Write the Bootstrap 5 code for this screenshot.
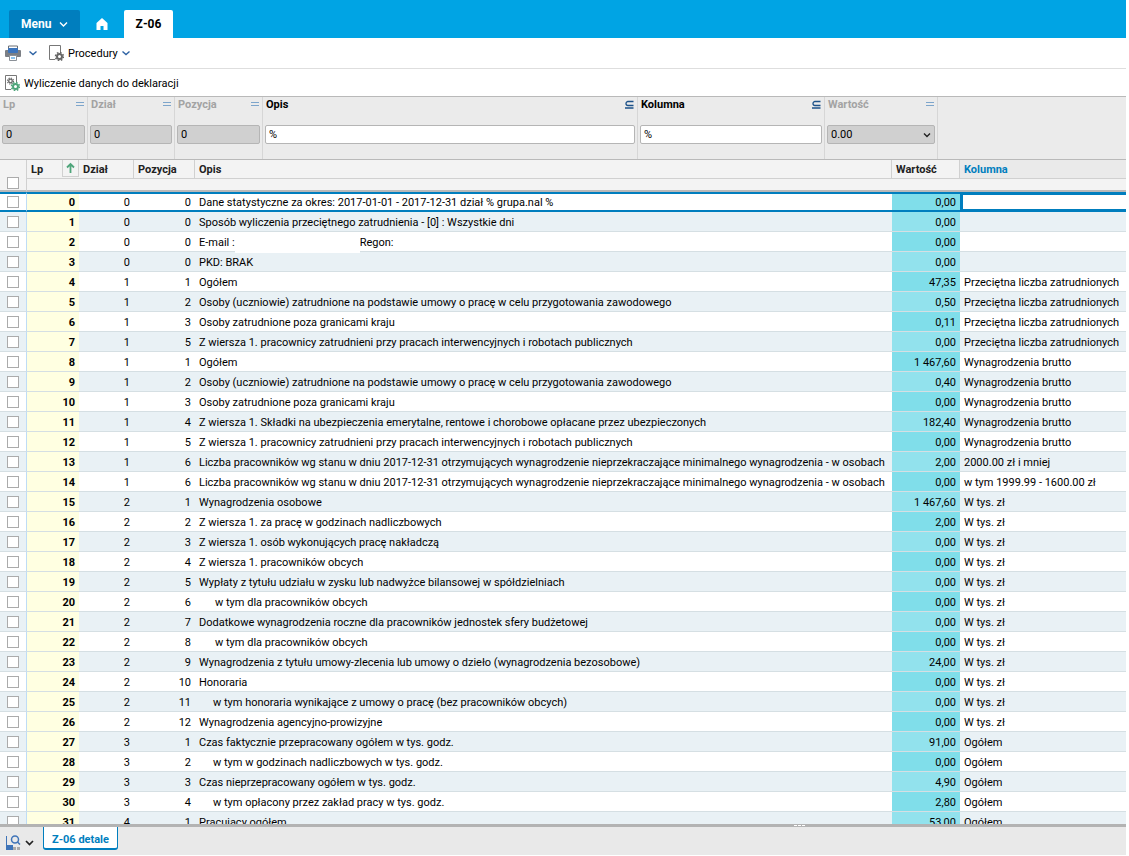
<!DOCTYPE html>
<html lang="pl">
<head>
<meta charset="utf-8">
<meta name="viewport" content="width=device-width, initial-scale=1">
<title>Z-06</title>
<link href="https://cdn.jsdelivr.net/npm/bootstrap@5.3.0/dist/css/bootstrap.min.css" rel="stylesheet">
<style>
  :root { --blue: #007ebe; --sky: #00a4e4; --line: #b9b9b9; }
  body { font: 11px/16px Roboto, "Liberation Sans", sans-serif; color: #000; background: #fff; }
  svg { display: block; flex: none; }
  .app { height: 100vh; padding-right: 3px; padding-bottom: 1px; }
  .topbar { height: 38px; background: var(--sky); padding-left: 9px; }
  .topbar .tab-item { height: 28px; border: 0; border-radius: 2px 2px 0 0; font-size: 12px; font-weight: 700; color: #fff; }
  .topbar .menu-btn { width: 71px; background: var(--blue); padding: 0 12px; }
  .topbar .home-tab { width: 44px; }
  .topbar .open-tab { width: 49px; background: #fff; color: #000; }
  .tool { border: 0; background: none; padding: 0; color: #000; }
  .tool span { padding-top: 2px; }
  .toolrow-a { height: 31px; border-bottom: 1px solid #dedede; padding-left: 5px; }
  .toolrow-b { height: 28px; border-bottom: 1px solid var(--line); padding-left: 5px; }
  .filters { display: grid; grid-template-columns: 88px 87px 88px 375fr 187fr 113px 188fr; height: 63px; background: #ebebeb; border-bottom: 1px solid var(--line); }
  .fcell { border-right: 1px solid #d6d6d6; padding: 0 2px; min-width: 0; }
  .fcell:last-child { border: 0; }
  .fhead { height: 28px; padding: 0 1px; font-weight: 700; }
  .fhead label { line-height: 15px; }
  .fcell.off .fhead { color: #a3a3a3; }
  .fcell .fin { display: block; width: 100%; height: 19px; min-height: 0; line-height: 16px; padding: 0 3px; font-size: 11px; color: #000; border: 1px solid #b5b5b5; border-radius: 2px; background-color: #fff; }
  .fcell.off .fin { background-color: #d0d0d0; }
  .fcell select.fin { appearance: none; background: #d0d0d0 url("data:image/svg+xml,%3Csvg xmlns='http://www.w3.org/2000/svg' viewBox='0 0 8 8'%3E%3Cpath d='M1 2.5l3 3 3-3' fill='none' stroke='%23222' stroke-width='1.4'/%3E%3C/svg%3E") no-repeat right 3px center / 8px 8px; }
  .gridwrap { flex: 1 1 0; min-height: 0; overflow: hidden; }
  .grid { table-layout: fixed; width: 100%; margin: 0; border-collapse: separate; border-spacing: 0; color: #000; }
  .grid > * > tr > * { padding: 0 4px; white-space: nowrap; vertical-align: top; border: 0 solid #d5dfe3; box-shadow: none; color: #000; }
  .grid thead th { height: 19px; line-height: 16px; padding-top: 2px; background: #f3f3f3; border-right: 1px solid #d0d0d0; border-bottom: 1px solid #d0d0d0; color: #222; }
  .grid thead th.current { background: #eaeaea; color: var(--blue); border-right: 0; }
  .grid thead th:first-child { border-bottom: 2px solid var(--line); padding: 17px 7px 0; }
  .grid thead th.sorted { padding-top: 0; padding-right: 0; border-right: 0; }
  .sorted .caption-text { padding-top: 2px; }
  .grid thead td { height: 13px; background: #f3f3f3; border-bottom: 2px solid var(--line); }
  .sortbox { width: 17px; height: 17px; border: 1px solid #d0d0d0; border-top: 0; }
  .tick { appearance: none; display: block; width: 12px; height: 12px; margin: 0; border: 1px solid #ababab; background: #fff; }
  .grid tbody td, .grid tbody th { height: 20px; line-height: 17px; padding-top: 2px; border-bottom-width: 1px; text-align: left; }
  .grid tbody tr:nth-child(even) > * { background: #e9f1f5; }
  .grid tbody tr > :first-child { padding: 4px 7px 0; border-right: 1px solid #bfdcf5; }
  .grid tbody tr > th { background: #ffffe1; text-align: right; }
  .grid tbody tr:nth-child(even) > th { background: #ffffe1; }
  .grid tbody tr > .num { text-align: right; padding-right: 4px; }
  .grid tbody tr > .sum { background: #80deea; text-align: right; }
  .grid tbody tr:nth-child(even) > .sum { background: #92e2ed; }
  .grid tbody tr.chosen > * { border-top: 2px solid var(--blue); border-bottom: 2px solid var(--blue); line-height: 14px; }
  .grid tbody tr.chosen > :first-child { padding-top: 2px; }
  .grid tbody tr.chosen > .focus-cell { border: 3px solid var(--blue); border-right: 0; }
  .hidden-data { display: inline-block; vertical-align: top; width: 125px; height: 19px; margin-bottom: -2px; background: #fff; }
  .indent-s { padding-left: 14px; }
  .indent-m { padding-left: 16px; }
  .splitter { height: 3px; background: #b3b3b3; padding-left: 472px; }
  .splitter i { width: 3px; height: 1px; margin-top: 1px; background: #fff; }
  .footbar { height: 28px; background: #e9e9e9; padding-left: 6px; }
  .foot-tab { width: 75px; height: 23px; border: 1px solid var(--blue); border-top: 0; border-bottom-width: 2px; border-radius: 0 0 3px 3px; background: #fff; color: var(--blue); font-weight: 700; margin-left: 9px; padding: 4px 0 0; }
</style>
</head>
<body>
<div class="app d-flex flex-column">
  <nav class="topbar d-flex align-items-end">
    <button class="tab-item menu-btn d-flex align-items-center justify-content-between" type="button">Menu
      <svg width="9" height="8" viewBox="0 0 9 8"><path d="M1 2.500l3.500 3.500L8 2.500" fill="none" stroke="#fff" stroke-width="1.400"/></svg>
    </button>
    <a class="tab-item home-tab d-flex align-items-center justify-content-center" href="#" aria-label="Start">
      <svg width="12" height="12" viewBox="0 0 12 12"><path d="M6 0L.5 5v7H4.500V8h3v4h4V5z" fill="#fff"/></svg>
    </a>
    <a class="tab-item open-tab d-flex align-items-center justify-content-center text-decoration-none" href="#">Z-06</a>
  </nav>

  <div class="toolrow-a d-flex align-items-center">
    <button class="tool d-flex align-items-center gap-2" type="button" aria-label="Drukuj">
      <svg width="16" height="16" viewBox="0 0 16 16"><path d="M3.500 5V1h9v4" fill="#fff" stroke="#6b6f75"/><path d="M1 5h14q1 0 1 1v5q0 1-1 1H1q-1 0-1-1V6q0-1 1-1z" fill="#7b7f85"/><rect x="3" y="3" width="10" height="5" rx="1" fill="#3b74bd"/><path d="M4.500 10.500h7v5h-7z" fill="#fff" stroke="#8b9097"/><path d="M6 12h4v2H6z" fill="#8cc4ee"/></svg>
      <svg width="8" height="8" viewBox="0 0 8 8"><path d="M.5 2.500L4 5.500l3.500-3" fill="none" stroke="#2d62a3" stroke-width="1.400"/></svg>
    </button>
    <button class="tool d-flex align-items-center gap-1 ms-2 ps-1" type="button">
      <svg width="15" height="16" viewBox="0 0 15 16"><path d="M6 14.500H.5V.5h11V7" fill="#fff" stroke="#777"/><circle cx="10.500" cy="11.500" r="2.500" fill="none" stroke="#666" stroke-width="2"/><circle cx="10.500" cy="11.500" r="4" fill="none" stroke="#666" stroke-width="1.500" stroke-dasharray="1.600 1.540"/></svg>
      <span>Procedury</span>
      <svg width="8" height="8" viewBox="0 0 8 8"><path d="M.5 2.500L4 5.500l3.500-3" fill="none" stroke="#2d62a3" stroke-width="1.400"/></svg>
    </button>
  </div>

  <div class="toolrow-b d-flex align-items-center">
    <button class="tool d-flex align-items-center gap-1" type="button">
      <svg width="15" height="16" viewBox="0 0 15 16"><path d="M6 14.500H.5V.5h11V7" fill="#fff" stroke="#777"/><circle cx="5.500" cy="6" r="1.800" fill="none" stroke="#666" stroke-width="1.300"/><circle cx="5.500" cy="6" r="3" fill="none" stroke="#666" stroke-width="1.200" stroke-dasharray="1.200 1.156"/><circle cx="10.500" cy="11.500" r="2.500" fill="none" stroke="#4fa57b" stroke-width="2"/><circle cx="10.500" cy="11.500" r="4" fill="none" stroke="#4fa57b" stroke-width="1.500" stroke-dasharray="1.600 1.540"/></svg>
      <span>Wyliczenie danych do deklaracji</span>
    </button>
  </div>

  <form class="filters">
    <div class="fcell off"><div class="fhead d-flex justify-content-between"><label for="f1">Lp</label><svg width="8" height="15" viewBox="0 0 8 15"><path d="M0 5.500h8M0 8.500h8" stroke="#7da5cb"/></svg></div><input class="fin" id="f1" value="0"></div>
    <div class="fcell off"><div class="fhead d-flex justify-content-between"><label for="f2">Dział</label><svg width="8" height="15" viewBox="0 0 8 15"><path d="M0 5.500h8M0 8.500h8" stroke="#7da5cb"/></svg></div><input class="fin" id="f2" value="0"></div>
    <div class="fcell off"><div class="fhead d-flex justify-content-between"><label for="f3">Pozycja</label><svg width="8" height="15" viewBox="0 0 8 15"><path d="M0 5.500h8M0 8.500h8" stroke="#7da5cb"/></svg></div><input class="fin" id="f3" value="0"></div>
    <div class="fcell"><div class="fhead d-flex justify-content-between"><label for="f4">Opis</label><svg width="9" height="15" viewBox="0 0 9 15"><path d="M8.500 4.500H3a1.500 1.500 0 0 0 0 4h5.500M0 11h8.500" fill="none" stroke="#1d5289" stroke-width="1.300"/></svg></div><input class="fin" id="f4" value="%"></div>
    <div class="fcell"><div class="fhead d-flex justify-content-between"><label for="f5">Kolumna</label><svg width="9" height="15" viewBox="0 0 9 15"><path d="M8.500 4.500H3a1.500 1.500 0 0 0 0 4h5.500M0 11h8.500" fill="none" stroke="#1d5289" stroke-width="1.300"/></svg></div><input class="fin" id="f5" value="%"></div>
    <div class="fcell off"><div class="fhead d-flex justify-content-between"><label for="f6">Wartość</label><svg width="8" height="15" viewBox="0 0 8 15"><path d="M0 5.500h8M0 8.500h8" stroke="#7da5cb"/></svg></div><select class="fin" id="f6"><option>0.00</option></select></div>
    <div class="fcell"></div>
  </form>

  <div class="gridwrap">
    <table class="grid table">
      <colgroup><col style="width:27px"><col style="width:52px"><col style="width:55px"><col style="width:61px"><col><col style="width:68px"><col style="width:166px"></colgroup>
      <thead>
        <tr>
          <th rowspan="2"><input class="tick" type="checkbox" aria-label="Zaznacz wszystkie"></th>
          <th class="sorted"><div class="d-flex justify-content-between"><span class="caption-text">Lp</span><span class="sortbox"><svg width="15" height="16" viewBox="0 0 15 16"><path d="M7.500 13V4M4 7.500L7.500 4 11 7.500" fill="none" stroke="#4fa57b" stroke-width="1.800"/></svg></span></div></th>
          <th>Dział</th><th>Pozycja</th><th>Opis</th><th>Wartość</th><th class="current">Kolumna</th>
        </tr>
        <tr><td colspan="6"></td></tr>
      </thead>
      <tbody id="rows"></tbody>
    </table>
  </div>

  <div class="splitter d-flex justify-content-center"><div class="d-flex" style="gap:1px"><i></i><i></i><i></i></div></div>
  <footer class="footbar d-flex align-items-start">
    <button class="tool d-flex align-items-center gap-1 pt-2" type="button" aria-label="Widoki">
      <svg width="15" height="16" viewBox="0 0 15 16"><path d="M0 1h1v9h6v5H0z" fill="#3f74b8"/><path d="M7 12h3v3H7zM11 12h3v3h-3z" fill="#aaa"/><circle cx="9" cy="4.500" r="3.500" fill="#e9e9e9" stroke="#3f74b8" stroke-width="1.500"/><path d="M11.500 7l2.500 2.500" stroke="#3f74b8" stroke-width="1.500"/></svg>
      <svg width="9" height="8" viewBox="0 0 9 8"><path d="M1 2L4.500 5.500 8 2" fill="none" stroke="#222" stroke-width="1.700"/></svg>
    </button>
    <button class="foot-tab" type="button">Z-06 detale</button>
  </footer>
</div>

<script>
  const zal = 'Przeciętna liczba zatrudnionych', wb = 'Wynagrodzenia brutto', tys = 'W tys. zł';
  const uczniowie = 'Osoby (uczniowie) zatrudnione na podstawie umowy o pracę w celu przygotowania zawodowego';
  const granica = 'Osoby zatrudnione poza granicami kraju';
  const interw = 'Z wiersza 1. pracownicy zatrudnieni przy pracach interwencyjnych i robotach publicznych';
  const liczba = 'Liczba pracowników wg stanu w dniu 2017-12-31 otrzymujących wynagrodzenie nieprzekraczające minimalnego wynagrodzenia - w osobach';
  const obcy = '<span class="indent-m">w tym dla pracowników obcych</span>';
  const data = [
    [0, 0, 'Dane statystyczne za okres: 2017-01-01 - 2017-12-31 dział % grupa.nal %', '0,00', ''],
    [0, 0, 'Sposób wyliczenia przeciętnego zatrudnienia - [0] : Wszystkie dni', '0,00', ''],
    [0, 0, 'E-mail :<span class="hidden-data"></span>Regon:', '0,00', ''],
    [0, 0, 'PKD: BRAK', '0,00', ''],
    [1, 1, 'Ogółem', '47,35', zal],
    [1, 2, uczniowie, '0,50', zal],
    [1, 3, granica, '0,11', zal],
    [1, 5, interw, '0,00', zal],
    [1, 1, 'Ogółem', '1 467,60', wb],
    [1, 2, uczniowie, '0,40', wb],
    [1, 3, granica, '0,00', wb],
    [1, 4, 'Z wiersza 1. Składki na ubezpieczenia emerytalne, rentowe i chorobowe opłacane przez ubezpieczonych', '182,40', wb],
    [1, 5, interw, '0,00', wb],
    [1, 6, liczba, '2,00', '2000.00 zł i mniej'],
    [1, 6, liczba, '0,00', 'w tym 1999.99 - 1600.00 zł'],
    [2, 1, 'Wynagrodzenia osobowe', '1 467,60', tys],
    [2, 2, 'Z wiersza 1. za pracę w godzinach nadliczbowych', '2,00', tys],
    [2, 3, 'Z wiersza 1. osób wykonujących pracę nakładczą', '0,00', tys],
    [2, 4, 'Z wiersza 1. pracowników obcych', '0,00', tys],
    [2, 5, 'Wypłaty z tytułu udziału w zysku lub nadwyżce bilansowej w spółdzielniach', '0,00', tys],
    [2, 6, obcy, '0,00', tys],
    [2, 7, 'Dodatkowe wynagrodzenia roczne dla pracowników jednostek sfery budżetowej', '0,00', tys],
    [2, 8, obcy, '0,00', tys],
    [2, 9, 'Wynagrodzenia z tytułu umowy-zlecenia lub umowy o dzieło (wynagrodzenia bezosobowe)', '24,00', tys],
    [2, 10, 'Honoraria', '0,00', tys],
    [2, 11, '<span class="indent-s">w tym honoraria wynikające z umowy o pracę (bez pracowników obcych)</span>', '0,00', tys],
    [2, 12, 'Wynagrodzenia agencyjno-prowizyjne', '0,00', tys],
    [3, 1, 'Czas faktycznie przepracowany ogółem w tys. godz.', '91,00', 'Ogółem'],
    [3, 2, '<span class="indent-s">w tym w godzinach nadliczbowych w tys. godz.</span>', '0,00', 'Ogółem'],
    [3, 3, 'Czas nieprzepracowany ogółem w tys. godz.', '4,90', 'Ogółem'],
    [3, 4, '<span class="indent-s">w tym opłacony przez zakład pracy w tys. godz.</span>', '2,80', 'Ogółem'],
    [4, 1, 'Pracujący ogółem', '53,00', 'Ogółem']
  ];
  document.getElementById('rows').innerHTML = data.map(([dzial, poz, opis, wart, kol], lp) => `
    <tr${lp === 0 ? ' class="chosen"' : ''}>
      <td><input class="tick" type="checkbox" aria-label="Zaznacz wiersz ${lp}"></td>
      <th scope="row">${lp}</th><td class="num">${dzial}</td><td class="num">${poz}</td>
      <td>${opis}</td><td class="sum">${wart}</td><td${lp === 0 ? ' class="focus-cell"' : ''}>${kol}</td>
    </tr>`).join('');
</script>
<script src="https://cdn.jsdelivr.net/npm/bootstrap@5.3.0/dist/js/bootstrap.bundle.min.js"></script>
</body>
</html>
